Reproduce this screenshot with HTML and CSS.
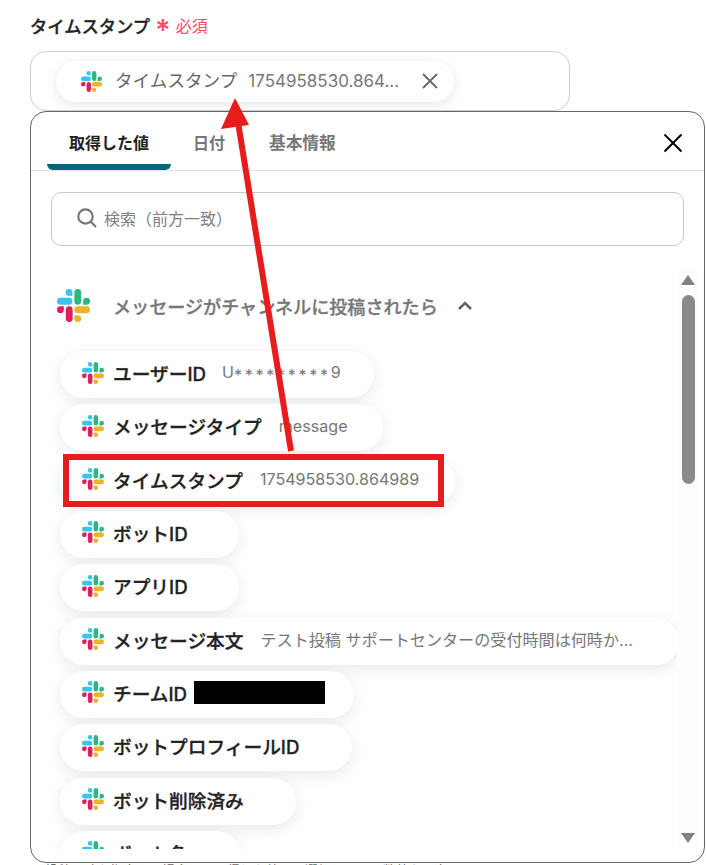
FILE: index.html
```html
<!DOCTYPE html>
<html lang="ja">
<head>
<meta charset="utf-8">
<title>タイムスタンプ</title>
<link rel="stylesheet" href="styles.css">
</head>
<body>
<svg class="defs" width="0" height="0" aria-hidden="true">
  <symbol id="slack" viewBox="0 0 54 54">
    <path fill="#36c5f0" d="M19.7 0a5.6 5.6 0 0 0 0 11.2h5.6V5.6A5.6 5.6 0 0 0 19.7 0zM5.6 14.4a5.6 5.6 0 0 0 0 11.2h14.1a5.6 5.6 0 0 0 0-11.2z"/>
    <path fill="#2eb67d" d="M54 20a5.6 5.6 0 0 0-11.2 0v5.6h5.6A5.6 5.6 0 0 0 54 20zM39.600 20V5.600a5.600 5.600 0 0 0-11.200 0V20a5.600 5.600 0 0 0 11.200 0z"/>
    <path fill="#ecb22e" d="M34 54a5.600 5.600 0 0 0 0-11.200h-5.600v5.600A5.600 5.600 0 0 0 34 54zm0-14.400h14.400a5.600 5.600 0 0 0 0-11.200H34a5.600 5.600 0 0 0 0 11.200z"/>
    <path fill="#e01e5a" d="M0 34a5.600 5.600 0 0 0 11.200 0v-5.600H5.600A5.600 5.600 0 0 0 0 34zm14.400 0v14.400a5.600 5.600 0 0 0 11.200 0V34a5.600 5.600 0 0 0-11.200 0z"/>
  </symbol>
</svg>

<main class="page">
  <div class="label-row">
    <span class="label">タイムスタンプ</span>
    <span class="asterisk">*</span>
    <span class="required">必須</span>
  </div>
  <div class="field">
    <div class="chip">
      <svg class="chip-icon"><use href="#slack"/></svg>
      <span class="chip-name">タイムスタンプ</span>
      <span class="chip-value">1754958530.864...</span>
      <svg class="chip-x" viewBox="0 0 16 16"><path d="M1 1l14 14M15 1L1 15"/></svg>
    </div>
  </div>
  <p class="behind">投稿日時を指定する場合は、取得した値から選択するか、数値を入力。</p>
</main>

<section class="panel">
  <header class="tabs">
    <span class="tab tab-active">取得した値</span>
    <span class="tab tab-date">日付</span>
    <span class="tab tab-info">基本情報</span>
    <svg class="close" viewBox="0 0 20 20"><path d="M1.500 1.500l17 17M18.500 1.500l-17 17"/></svg>
  </header>
  <div class="search">
    <svg class="search-icon" viewBox="0 0 20 20"><circle cx="8.500" cy="8.500" r="7.200"/><path d="M13.800 13.800L19 19"/></svg>
    <span>検索（前方一致）</span>
  </div>
  <div class="body">
    <div class="list">
      <div class="group">
        <svg class="group-icon"><use href="#slack"/></svg>
        <span class="group-title">メッセージがチャンネルに投稿されたら</span>
        <svg class="chevron" viewBox="0 0 16 10"><path d="M2 8l6-6 6 6"/></svg>
      </div>
      <div class="pill w-user"><svg class="icon"><use href="#slack"/></svg><b>ユーザーID</b><span class="v v-user">U<span class="stars">*********</span>9</span></div>
      <div class="pill w-type"><svg class="icon"><use href="#slack"/></svg><b>メッセージタイプ</b><span class="v">message</span></div>
      <div class="pill w-time"><svg class="icon"><use href="#slack"/></svg><b>タイムスタンプ</b><span class="v">1754958530.864989</span></div>
      <div class="pill w-bot"><svg class="icon"><use href="#slack"/></svg><b>ボットID</b></div>
      <div class="pill w-bot"><svg class="icon"><use href="#slack"/></svg><b>アプリID</b></div>
      <div class="pill w-msg"><svg class="icon"><use href="#slack"/></svg><b>メッセージ本文</b><span class="v">テスト投稿 サポートセンターの受付時間は何時か...</span></div>
      <div class="pill w-team"><svg class="icon"><use href="#slack"/></svg><b>チームID</b><span class="mask"></span></div>
      <div class="pill w-prof"><svg class="icon"><use href="#slack"/></svg><b>ボットプロフィールID</b></div>
      <div class="pill w-del"><svg class="icon"><use href="#slack"/></svg><b>ボット削除済み</b></div>
      <div class="pill w-name"><svg class="icon"><use href="#slack"/></svg><b>ボット名</b></div>
    </div>
    <div class="scrollbar">
      <span class="arrow-up"></span>
      <span class="thumb"></span>
      <span class="arrow-down"></span>
    </div>
  </div>
</section>

<div class="highlight"></div>
<svg class="pointer" width="706" height="865" viewBox="0 0 706 865">
  <path class="pointer-line" d="M291 451L238 122"/>
  <path class="pointer-head" d="M235 98L249 125L221 129z"/>
</svg>
</body>
</html>
```

FILE: styles.css
```css
* { box-sizing: border-box; }

html, body {
  margin: 0;
  height: 865px;
  overflow: hidden;
  background: #fff;
}

body {
  position: relative;
  font-family: "Inter", "Noto Sans CJK JP", sans-serif;
  color: #222;
}

.defs { position: absolute; }

.page { padding: 12px 0 0 30px; }

.label-row {
  display: flex;
  align-items: center;
  height: 26px;
}

.label { font-size: 17.300px; font-weight: 500; color: #222; -webkit-text-stroke: .3px #222; }

.asterisk {
  margin-left: 5px;
  font-size: 29px;
  font-weight: 600;
  line-height: 26px;
  padding-top: 9px;
  color: #ff4d6a;
}

.required { margin-left: 5px; font-size: 16px; color: #ff4d6a; }

.field {
  display: flex;
  align-items: center;
  width: 540px;
  height: 60px;
  margin-top: 13px;
  padding-left: 25px;
  border: 1px solid #cfcfcf;
  border-radius: 16px;
}

.chip {
  display: flex;
  align-items: center;
  width: 398px;
  height: 41px;
  padding-left: 25px;
  border-radius: 21px;
  background: #fff;
  box-shadow: 0 3px 12px rgba(0, 0, 0, .1);
}

.chip-icon { width: 21px; height: 21px; flex: none; }

.chip-name { margin: 0 0 3px 13px; font-size: 17.600px; color: #666; }

.chip-value { margin-left: 11px; font-size: 17px; color: #777; }

.chip-x {
  width: 16px;
  height: 16px;
  margin-left: 23px;
  fill: none;
  stroke: #666;
  stroke-width: 1.800;
}

.behind {
  margin: 751px 0 0 15px;
  font-size: 13px;
  line-height: 16px;
  white-space: nowrap;
  color: #666;
}

/* overlays */
.panel {
  position: absolute;
  left: 30px;
  top: 111px;
  width: 675px;
  height: 752px;
  display: flex;
  flex-direction: column;
  background: #fff;
  border: 1px solid #666;
  border-radius: 16px;
}

.tabs {
  position: relative;
  flex: none;
  height: 59px;
  border-bottom: 1px solid #e2e2e2;
}

.tab {
  position: absolute;
  top: 20px;
  font-size: 16px;
  font-weight: 700;
  line-height: 22px;
  color: #777;
}

.tab-active {
  left: 16px;
  width: 124px;
  height: 38px;
  padding-left: 22px;
  color: #222;
  border-bottom: 6px solid #05667d;
  border-radius: 0 0 6px 6px / 0 0 6px 6px;
}

.tab-date { left: 162px; }
.tab-info { left: 238px; font-size: 16.700px; }

.close {
  position: absolute;
  right: 21px;
  top: 21px;
  width: 20px;
  height: 20px;
  fill: none;
  stroke: #000;
  stroke-width: 2;
}

.search {
  flex: none;
  display: flex;
  align-items: center;
  height: 54px;
  margin: 21px 20px 0;
  padding: 0 0 3px 25px;
  border: 1px solid #c9c9c9;
  border-radius: 10px;
  font-size: 16px;
  color: #808080;
}

.search-icon {
  width: 20px;
  height: 20px;
  margin-right: 7px;
  fill: none;
  stroke: #777;
  stroke-width: 2.200;
}

.body {
  flex: none;
  display: flex;
  height: 603px;
  margin-top: 22px;
}

.list {
  flex: 1;
  height: 581px;
  overflow: hidden;
  padding: 0 0 0 29px;
}

.group {
  display: flex;
  align-items: center;
  height: 83px;
  margin-left: -3px;
  padding-bottom: 8px;
}

.group-icon { width: 33px; height: 33px; flex: none; }

.group-title {
  margin-left: 23px;
  font-size: 18.100px;
  font-weight: 500;
  color: #777;
  -webkit-text-stroke: .3px #777;
}

.chevron {
  width: 16px;
  height: 10px;
  margin-left: 19px;
  fill: none;
  stroke: #666;
  stroke-width: 2.600;
}

.pill {
  display: flex;
  align-items: center;
  height: 47px;
  margin-bottom: 6.330px;
  padding-left: 22px;
  padding-bottom: 4px;
  border-radius: 24px;
  background: #fff;
  box-shadow: 0 4px 16px rgba(0, 0, 0, .09);
  white-space: nowrap;
}

.icon { width: 22px; height: 22px; flex: none; }

.pill b {
  margin-left: 9px;
  font-size: 18.700px;
  font-weight: 500;
  color: #222;
  -webkit-text-stroke: .3px #222;
}

.v { margin-left: 17px; font-size: 16.100px; color: #777; }
.v-user { margin-left: 16px; }
.stars { letter-spacing: 2.700px; vertical-align: -3px; line-height: 1; }

.mask {
  width: 131px;
  height: 23px;
  margin-left: 7px;
  background: #000;
}

.w-user { width: 314px; }
.w-type { width: 323px; }
.w-time { width: 395px; }
.w-bot { width: 179px; }
.w-msg { width: 619px; }
.w-team { width: 294px; }
.w-prof { width: 292px; }
.w-del { width: 236px; }
.w-name { width: 180px; }

.scrollbar {
  position: relative;
  flex: none;
  width: 22px;
  height: 581px;
  margin-right: 5px;
  background: #fdfdfd;
}

.arrow-up,
.arrow-down {
  position: absolute;
  left: 4px;
  width: 0;
  height: 0;
  border-left: 7px solid transparent;
  border-right: 7px solid transparent;
}

.arrow-up { top: 7px; border-bottom: 10px solid #808080; }
.arrow-down { bottom: 6px; border-top: 10px solid #808080; }

.thumb {
  position: absolute;
  left: 5px;
  top: 27px;
  width: 13px;
  height: 189px;
  border-radius: 7px;
  background: #8a8a8a;
}

.highlight {
  position: absolute;
  left: 63px;
  top: 454px;
  width: 381px;
  height: 53px;
  border: 6px solid #e71c1c;
}

.pointer { position: absolute; left: 0; top: 0; }
.pointer-line { fill: none; stroke: #e71c1c; stroke-width: 6; }
.pointer-head { fill: #e71c1c; }
```
